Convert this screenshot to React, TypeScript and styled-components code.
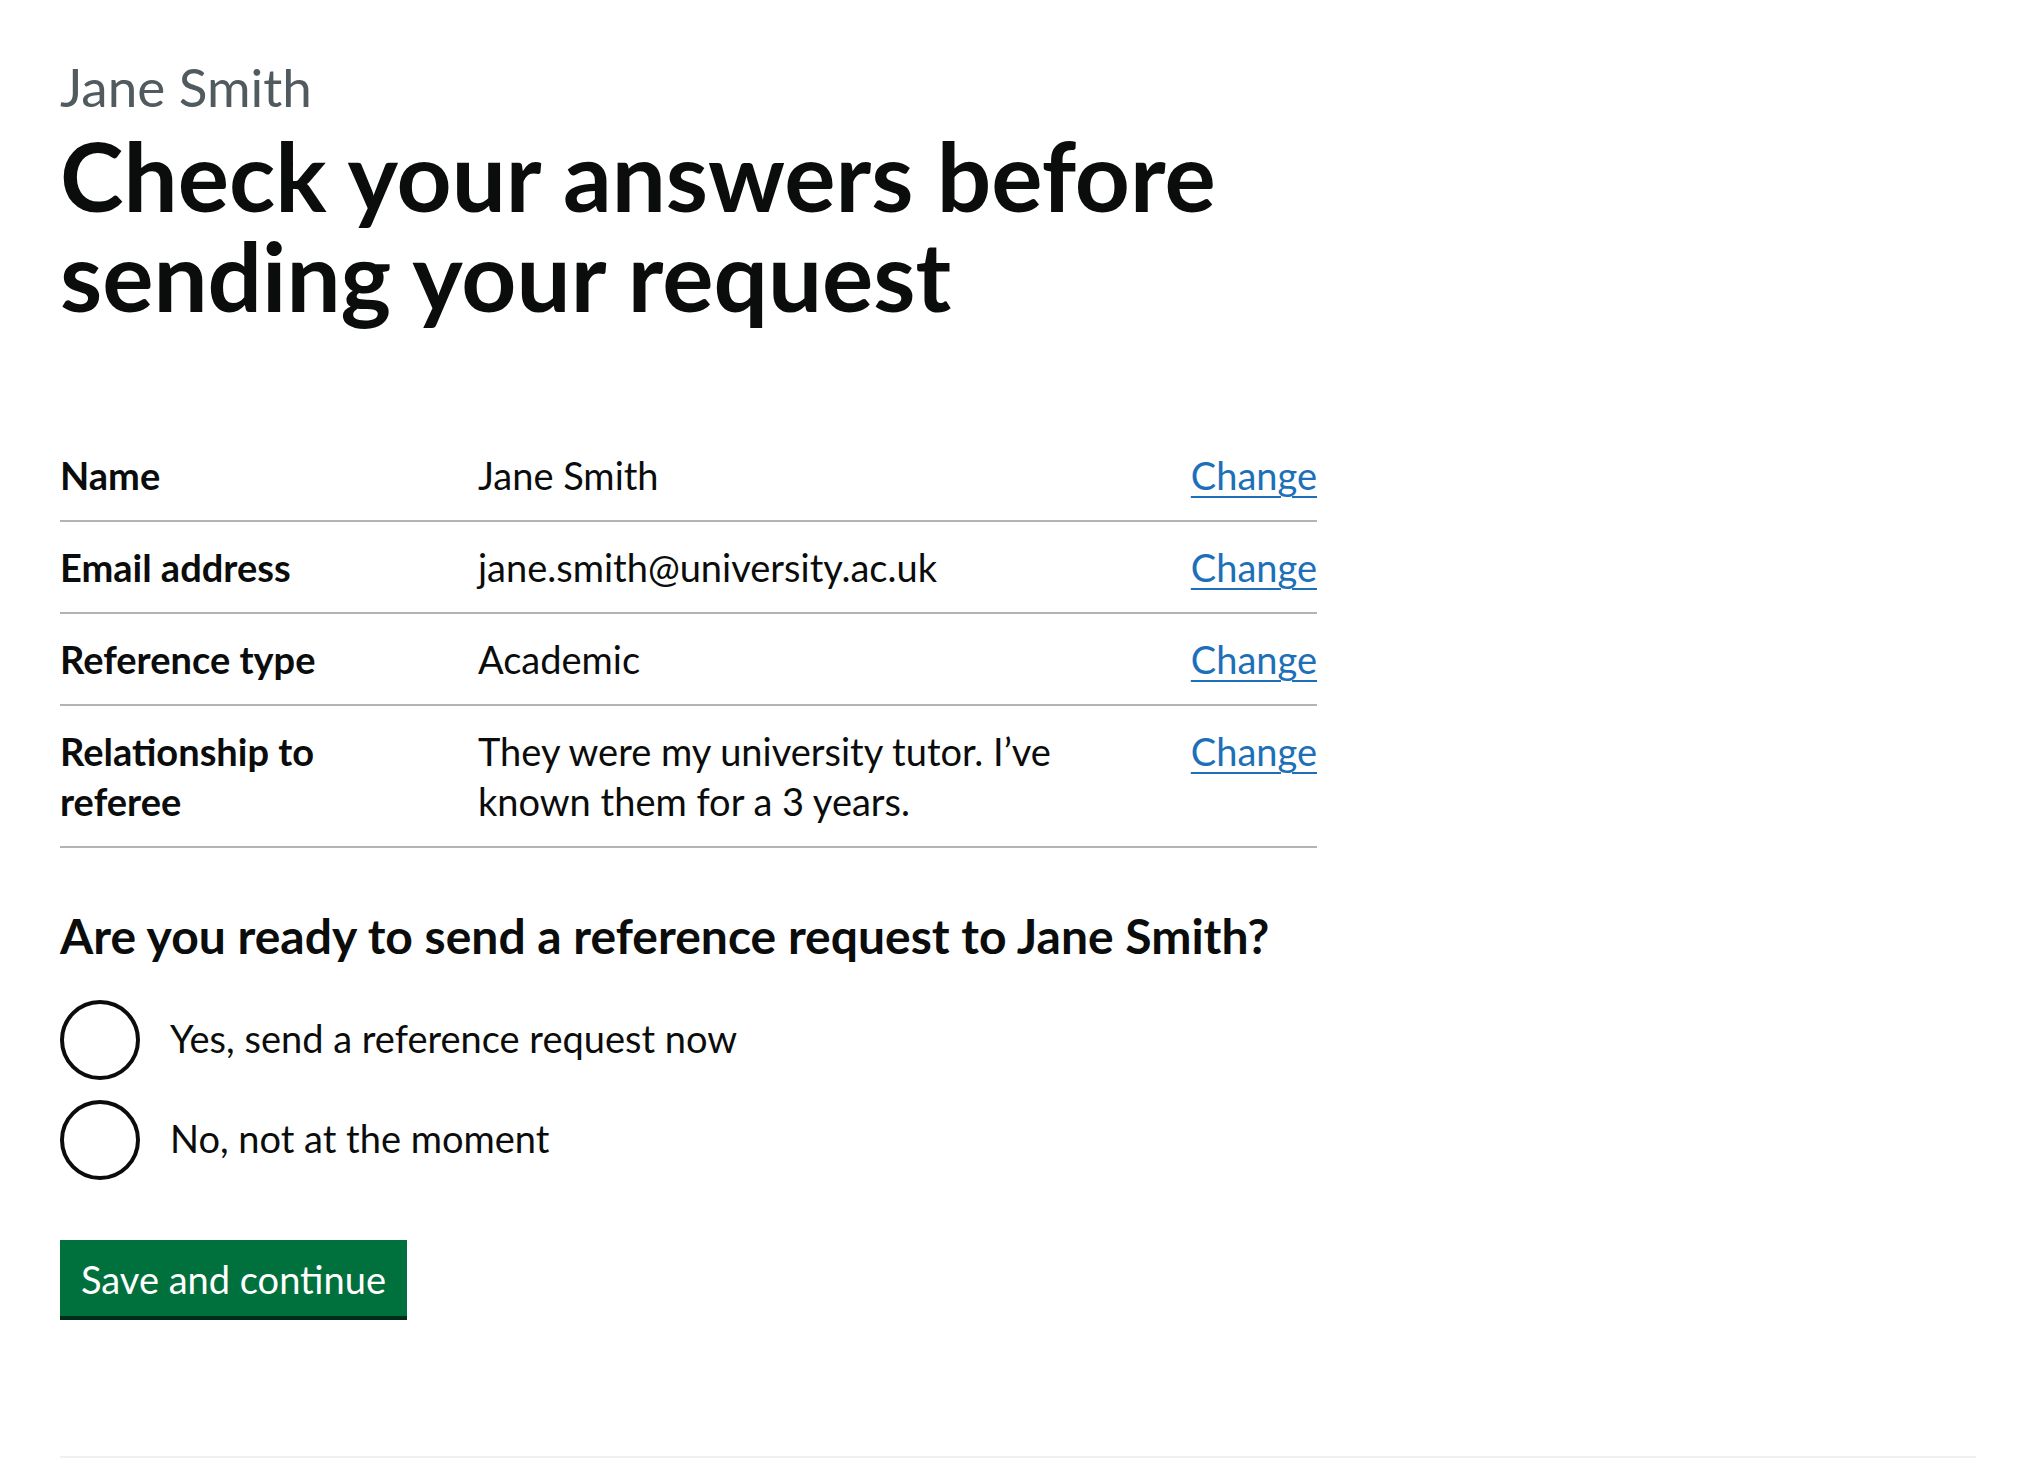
import React from "react";
import styled, { createGlobalStyle } from "styled-components";

const Colors = {
    Text: "#0b0c0c",
    Secondary: "#505a5f",
    Link: "#1d70b8",
    Border: "#b1b4b6",
    Green: "#00703c",
    GreenShadow: "#002d18",
    Footer: "#f0f0f0",
};

const GlobalStyle = createGlobalStyle`
    html, body {
        margin: 0;
        padding: 0;
        background: #ffffff;
    }
    body {
        font-family: Lato, "Liberation Sans", Arial, sans-serif;
        color: ${Colors.Text};
    }
    * {
        box-sizing: border-box;
    }
`;

const WidthContainer = styled.div`
    margin: 0 60px;
`;

const Main = styled.main`
    padding-top: 57px;
`;

const Caption = styled.span`
    display: block;
    font-size: 53px;
    line-height: 60px;
    color: ${Colors.Secondary};
    margin-bottom: 8px;
`;

const Heading = styled.h1`
    margin: 0 0 105px;
    font-size: 96px;
    line-height: 100px;
    font-weight: 700;
`;

const TwoThirds = styled.div`
    width: 1257px;
`;

const SummaryList = styled.dl`
    margin: 0 0 58px;
    font-size: 38px;
    line-height: 50px;
`;

const SummaryRow = styled.div`
    display: grid;
    grid-template-columns: 418px 1fr 200px;
    border-bottom: 2px solid ${Colors.Border};
`;

const Key = styled.dt`
    padding: 20px 40px 20px 0;
    font-weight: 700;
`;

const Value = styled.dd`
    margin: 0;
    padding: 20px 40px 20px 0;
`;

const Actions = styled.dd`
    margin: 0;
    padding: 20px 0;
    text-align: right;
`;

const Link = styled.a`
    color: ${Colors.Link};
    text-decoration: underline;
    text-decoration-thickness: 2px;
    text-underline-offset: 0.16em;
`;

const Fieldset = styled.fieldset`
    margin: 0 0 60px;
    padding: 0;
    border: 0;
    min-width: 0;
`;

const Legend = styled.legend`
    padding: 0;
    margin-bottom: 34px;
    font-size: 48px;
    line-height: 60px;
    font-weight: 700;
`;

const RadioItem = styled.div`
    display: flex;
    align-items: flex-start;
    min-height: 80px;
    margin-bottom: 20px;

    &:last-child {
        margin-bottom: 0;
    }
`;

const RadioCircle = styled.span`
    flex: none;
    width: 80px;
    height: 80px;
    border: 4px solid ${Colors.Text};
    border-radius: 50%;
`;

const RadioLabel = styled.label`
    padding: 13px 30px 10px;
    font-size: 38px;
    line-height: 50px;
`;

const Button = styled.button`
    display: inline-block;
    margin: 0;
    padding: 16px 17px 14px;
    border: 4px solid transparent;
    border-radius: 0;
    background: ${Colors.Green};
    box-shadow: 0 4px 0 ${Colors.GreenShadow};
    color: #ffffff;
    font-family: inherit;
    font-size: 38px;
    line-height: 38px;
    cursor: pointer;
`;

const Footer = styled.footer`
    margin-top: 140px;
    border-top: 2px solid ${Colors.Footer};
    height: 60px;
`;

const rows = [
    { key: "Name", value: "Jane Smith" },
    { key: "Email address", value: "jane.smith@university.ac.uk" },
    { key: "Reference type", value: "Academic" },
    { key: "Relationship to referee", value: "They were my university tutor. I’ve known them for a 3 years." },
];

const options = ["Yes, send a reference request now", "No, not at the moment"];

const App = () => {
    return (
        <>
            <GlobalStyle />
            <WidthContainer>
                <Main>
                    <Caption>Jane Smith</Caption>
                    <Heading>
                        Check your answers before
                        <br />
                        sending your request
                    </Heading>
                    <TwoThirds>
                        <SummaryList>
                            {rows.map(row => (
                                <SummaryRow key={row.key}>
                                    <Key>{row.key}</Key>
                                    <Value>{row.value}</Value>
                                    <Actions>
                                        <Link href='#'>Change</Link>
                                    </Actions>
                                </SummaryRow>
                            ))}
                        </SummaryList>
                        <Fieldset>
                            <Legend>Are you ready to send a reference request to Jane Smith?</Legend>
                            {options.map(option => (
                                <RadioItem key={option}>
                                    <RadioCircle />
                                    <RadioLabel>{option}</RadioLabel>
                                </RadioItem>
                            ))}
                        </Fieldset>
                    </TwoThirds>
                    <Button type='submit'>Save and continue</Button>
                </Main>
                <Footer />
            </WidthContainer>
        </>
    );
};

export default App;
